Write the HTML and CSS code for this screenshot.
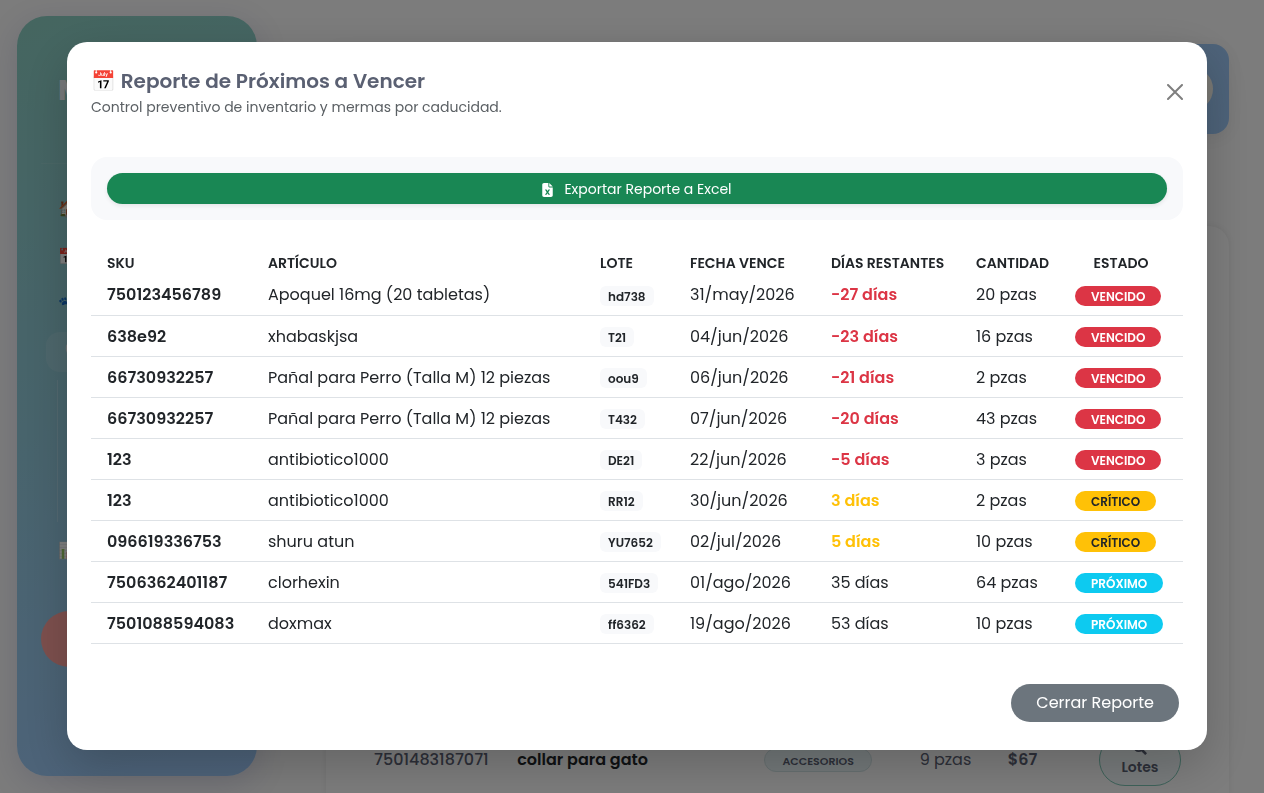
FILE: index.html
```html
<!DOCTYPE html>
<html lang="es">
<head>
<meta charset="utf-8">
<meta name="viewport" content="width=device-width, initial-scale=1">
<title>Reporte de Próximos a Vencer</title>
<link rel="stylesheet" href="styles.css">
</head>
<body>
<div class="app">
  <aside class="sidebar">
    <div class="brand">M</div>
    <nav class="menu">
      <a class="menu-item" href="#">🏠</a>
      <a class="menu-item" href="#">📅</a>
      <a class="menu-item" href="#">🐾</a>
      <a class="menu-item active" href="#">🦷</a>
      <div class="submenu"></div>
      <a class="menu-item" href="#">📊</a>
    </nav>
    <div class="logout"></div>
  </aside>
  <main class="main">
    <header class="topbar"><div class="avatar"></div></header>
    <section class="stock">
      <div class="stock-row">
        <span class="stock-sku">7501483187071</span>
        <span class="stock-name">collar para gato</span>
        <span class="stock-tag">ACCESORIOS</span>
        <span class="stock-qty">9 pzas</span>
        <span class="stock-price">$67</span>
        <button class="lots" type="button">
          <svg width="14" height="14" viewBox="0 0 16 16" fill="none" stroke="currentColor" stroke-width="2" aria-hidden="true"><circle cx="6.5" cy="6.5" r="5"/><path d="M10 10l5 5" stroke-width="3"/></svg>
          Lotes
        </button>
      </div>
    </section>
  </main>
</div>

<div class="backdrop">
  <div class="modal" role="dialog" aria-labelledby="report-title">
    <div class="modal-header">
      <div>
        <h2 class="modal-title" id="report-title">📅 Reporte de Próximos a Vencer</h2>
        <p class="modal-subtitle">Control preventivo de inventario y mermas por caducidad.</p>
      </div>
      <button class="close" type="button" aria-label="Cerrar">
        <svg width="16" height="16" viewBox="0 0 16 16" fill="none" stroke="currentColor" stroke-width="2" stroke-linecap="round" aria-hidden="true"><path d="M1 1l14 14M15 1L1 15"/></svg>
      </button>
    </div>
    <div class="modal-body">
      <div class="export-panel">
        <button class="export" type="button">
          <svg width="11" height="14" viewBox="0 0 384 512" fill="currentColor" aria-hidden="true"><path fill-rule="evenodd" d="M64 0C29 0 0 29 0 64v384c0 35 29 64 64 64h256c35 0 64-29 64-64V160H256c-18 0-32-14-32-32V0H64zm192 0v128h128L256 0zM156 240l36 54 36-54h58l-65 96 65 96h-58l-36-54-36 54H98l65-96-65-96h58z"/></svg>
          Exportar Reporte a Excel
        </button>
      </div>
      <table class="report">
        <colgroup><col class="c-sku"><col class="c-item"><col class="c-lot"><col class="c-date"><col class="c-days"><col class="c-qty"><col class="c-state"></colgroup>
        <thead>
          <tr><th>SKU</th><th>ARTÍCULO</th><th>LOTE</th><th>FECHA VENCE</th><th>DÍAS RESTANTES</th><th>CANTIDAD</th><th class="center">ESTADO</th></tr>
        </thead>
        <tbody>
          <tr><td class="sku">750123456789</td><td>Apoquel 16mg (20 tabletas)</td><td><span class="lot">hd738</span></td><td>31/may/2026</td><td class="late">-27 días</td><td>20 pzas</td><td><span class="badge expired">VENCIDO</span></td></tr>
          <tr><td class="sku">638e92</td><td>xhabaskjsa</td><td><span class="lot">T21</span></td><td>04/jun/2026</td><td class="late">-23 días</td><td>16 pzas</td><td><span class="badge expired">VENCIDO</span></td></tr>
          <tr><td class="sku">66730932257</td><td>Pañal para Perro (Talla M) 12 piezas</td><td><span class="lot">oou9</span></td><td>06/jun/2026</td><td class="late">-21 días</td><td>2 pzas</td><td><span class="badge expired">VENCIDO</span></td></tr>
          <tr><td class="sku">66730932257</td><td>Pañal para Perro (Talla M) 12 piezas</td><td><span class="lot">T432</span></td><td>07/jun/2026</td><td class="late">-20 días</td><td>43 pzas</td><td><span class="badge expired">VENCIDO</span></td></tr>
          <tr><td class="sku">123</td><td>antibiotico1000</td><td><span class="lot">DE21</span></td><td>22/jun/2026</td><td class="late">-5 días</td><td>3 pzas</td><td><span class="badge expired">VENCIDO</span></td></tr>
          <tr><td class="sku">123</td><td>antibiotico1000</td><td><span class="lot">RR12</span></td><td>30/jun/2026</td><td class="soon">3 días</td><td>2 pzas</td><td><span class="badge critical">CRÍTICO</span></td></tr>
          <tr><td class="sku">096619336753</td><td>shuru atun</td><td><span class="lot">YU7652</span></td><td>02/jul/2026</td><td class="soon">5 días</td><td>10 pzas</td><td><span class="badge critical">CRÍTICO</span></td></tr>
          <tr><td class="sku">7506362401187</td><td>clorhexin</td><td><span class="lot">541FD3</span></td><td>01/ago/2026</td><td>35 días</td><td>64 pzas</td><td><span class="badge next">PRÓXIMO</span></td></tr>
          <tr><td class="sku">7501088594083</td><td>doxmax</td><td><span class="lot">ff6362</span></td><td>19/ago/2026</td><td>53 días</td><td>10 pzas</td><td><span class="badge next">PRÓXIMO</span></td></tr>
        </tbody>
      </table>
    </div>
    <div class="modal-footer">
      <button class="dismiss" type="button">Cerrar Reporte</button>
    </div>
  </div>
</div>
</body>
</html>
```
FILE: styles.css
```css
* { box-sizing: border-box; }

body {
  margin: 0;
  overflow: hidden;
  background: #f8f8f8;
  color: #212529;
  font: 400 16px/24px Poppins, Inter, "Liberation Sans", sans-serif;
}

button { font: inherit; cursor: pointer; }

/* Page behind the dialog */
.app { display: flex; height: 100vh; }

.sidebar {
  display: flex;
  flex: 0 0 240px;
  flex-direction: column;
  margin: 16px 19px 17px 17px;
  padding: 57px 24px 0;
  overflow: hidden;
  border-radius: 30px;
  background: linear-gradient(165deg, #8accc0 0%, #90c8d8 50%, #9cc6f6 100%);
  box-shadow: 0 8px 32px rgba(31, 38, 135, 0.15);
}

.brand {
  height: 91px;
  padding-left: 17px;
  border-bottom: 1px solid rgba(255, 255, 255, 0.08);
  color: #f0f4f6;
  font-size: 28px;
  font-weight: 700;
  line-height: 36px;
}

.menu { display: flex; flex-direction: column; gap: 8px; margin-top: 24px; padding-left: 5px; }

.menu-item {
  height: 40px;
  padding: 1px 0 0 12px;
  border-radius: 14px;
  color: #ffffff;
  line-height: 40px;
  text-decoration: none;
}

.menu-item.active { padding-left: 16px; background: rgba(255, 255, 255, 0.12); }

.submenu { height: 142px; margin-left: 11px; border-left: 1px solid rgba(255, 255, 255, 0.2); }

.logout { height: 56px; margin-top: 41px; border-radius: 28px; background: #fba09c; }

.main {
  display: flex;
  flex: 1;
  flex-direction: column;
  gap: 92px;
  min-width: 0;
  padding: 44px 35px 0 50px;
}

.topbar {
  display: flex;
  flex: 0 0 90px;
  align-items: center;
  justify-content: flex-end;
  padding: 0 16px;
  border-radius: 16px;
  background: linear-gradient(90deg, #8accb8, #9cc6f4);
  box-shadow: 0 4px 16px rgba(0, 0, 0, 0.06);
}

.avatar { width: 44px; height: 44px; border-radius: 50%; background: #f4f2ea; }

.stock {
  display: flex;
  flex: 1;
  align-items: flex-end;
  padding: 0 48px;
  border-radius: 20px 20px 0 0;
  background: #fafafa;
  box-shadow: 0 0 6px rgba(0, 0, 0, 0.08);
}

.stock-row {
  display: grid;
  flex: 1;
  grid-template-columns: 143fr 247fr 155fr 88fr 91fr 82fr;
  align-items: center;
  height: 66px;
  color: #5a6072;
}

.stock-sku { font-weight: 500; }
.stock-name { color: #212529; font-weight: 600; }

.stock-tag {
  justify-self: start;
  padding: 3px 17px 1px;
  border: 1px solid #cfe0e2;
  border-radius: 12px;
  background: #e6f2f4;
  font-size: 11px;
  font-weight: 600;
  line-height: 18px;
}

.stock-price { font-weight: 600; }

.lots {
  display: flex;
  flex-direction: column;
  align-items: center;
  padding: 6px 0;
  border: 1px solid #7cc4b4;
  border-radius: 26px;
  background: #f0f7f8;
  color: #5a6072;
  font-size: 14px;
  font-weight: 600;
}

/* Dialog */
.backdrop {
  position: fixed;
  inset: 0;
  display: flex;
  align-items: flex-start;
  justify-content: center;
  padding: 42px 32px 42px 42px;
  background: rgba(0, 0, 0, 0.5);
}

.modal {
  flex: 1;
  max-width: 1140px;
  padding: 24px 24px 28px;
  border-radius: 20px;
  background: #ffffff;
  box-shadow: 0 16px 48px rgba(0, 0, 0, 0.2);
}

.modal-header { display: flex; align-items: center; justify-content: space-between; }
.modal-title { margin: 0; color: #5a6072; font-size: 20px; font-weight: 600; line-height: 30px; }
.modal-subtitle { margin: 0; color: #5b6064; font-size: 14px; line-height: 22px; }

.close {
  display: flex;
  padding: 0;
  border: 0;
  background: none;
  color: #7f7f7f;
}

.export-panel {
  margin: 39px 0 32px;
  padding: 16px;
  border-radius: 16px;
  background: #f8f9fb;
}

.export {
  display: flex;
  align-items: center;
  justify-content: center;
  gap: 11px;
  width: 100%;
  padding: 6px 8px 4px;
  border: 0;
  border-radius: 16px;
  background: #198754;
  box-shadow: 0 2px 4px rgba(0, 0, 0, 0.08);
  color: #ffffff;
  font-size: 14px;
  line-height: 21px;
}

.report { width: 100%; border-collapse: collapse; table-layout: fixed; white-space: nowrap; }

.c-sku { width: 161px; }
.c-item { width: 332px; }
.c-lot { width: 90px; }
.c-date { width: 141px; }
.c-days { width: 145px; }
.c-qty { width: 99px; }
.c-state { width: 124px; }

.report th { padding: 0 16px; font-size: 14px; font-weight: 600; line-height: 22px; text-align: left; }
.report th.center { text-align: center; }
.report td { height: 41px; padding: 2px 16px 0; border-bottom: 1px solid #dee2e6; }
.report .sku { font-weight: 600; }
.report .late { color: #dc3545; font-weight: 600; }
.report .soon { color: #ffc107; font-weight: 600; }

.lot,
.badge {
  display: inline-block;
  padding: 2px 8px 0;
  border-radius: 6px;
  background: #f8f9fb;
  font-size: 12px;
  font-weight: 600;
  line-height: 18px;
  vertical-align: middle;
}

.badge { padding: 2px 16px 0; border-radius: 10px; }
.expired { background: #dc3545; color: #ffffff; }
.critical { background: #ffc107; color: #212529; }
.next { background: #0dcaf0; color: #ffffff; }

.modal-footer { display: flex; justify-content: flex-end; margin-top: 40px; padding-right: 4px; }

.dismiss {
  padding: 7px 25px;
  border: 0;
  border-radius: 19px;
  background: #6c757d;
  color: #ffffff;
}
```
